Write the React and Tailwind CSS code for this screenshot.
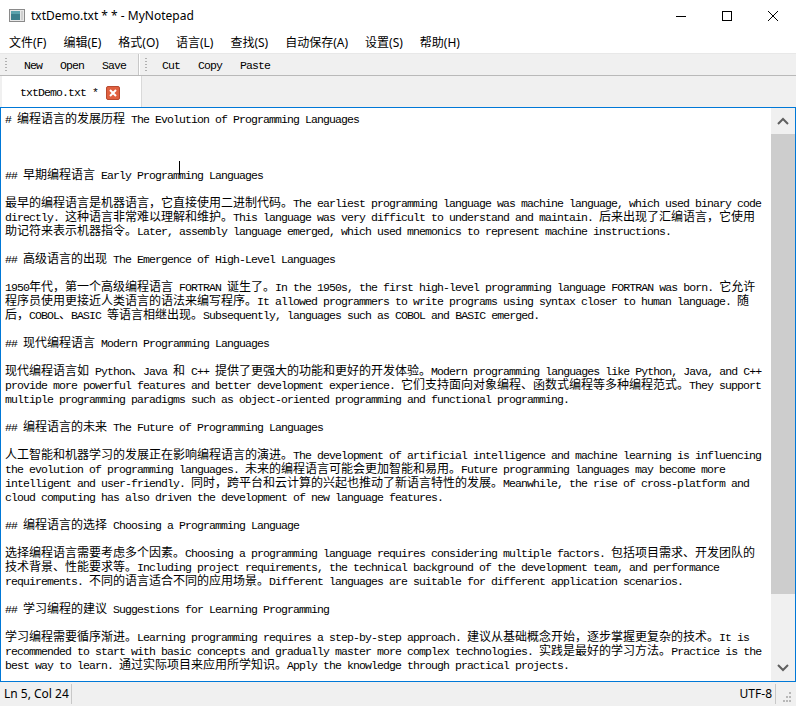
import React from "react";

const CJK_RE = /([\u3000-\u303f\u4e00-\u9fff\uff00-\uffef]+)/;

const lines = [
  "# 编程语言的发展历程 The Evolution of Programming Languages",
  "",
  "",
  "",
  "CARET",
  "",
  "最早的编程语言是机器语言，它直接使用二进制代码。The earliest programming language was machine language, which used binary code",
  "directly. 这种语言非常难以理解和维护。This language was very difficult to understand and maintain. 后来出现了汇编语言，它使用",
  "助记符来表示机器指令。Later, assembly language emerged, which used mnemonics to represent machine instructions.",
  "",
  "## 高级语言的出现 The Emergence of High-Level Languages",
  "",
  "1950年代，第一个高级编程语言 FORTRAN 诞生了。In the 1950s, the first high-level programming language FORTRAN was born. 它允许",
  "程序员使用更接近人类语言的语法来编写程序。It allowed programmers to write programs using syntax closer to human language. 随",
  "后，COBOL、BASIC 等语言相继出现。Subsequently, languages such as COBOL and BASIC emerged.",
  "",
  "## 现代编程语言 Modern Programming Languages",
  "",
  "现代编程语言如 Python、Java 和 C++ 提供了更强大的功能和更好的开发体验。Modern programming languages like Python, Java, and C++",
  "provide more powerful features and better development experience. 它们支持面向对象编程、函数式编程等多种编程范式。They support",
  "multiple programming paradigms such as object-oriented programming and functional programming.",
  "",
  "## 编程语言的未来 The Future of Programming Languages",
  "",
  "人工智能和机器学习的发展正在影响编程语言的演进。The development of artificial intelligence and machine learning is influencing",
  "the evolution of programming languages. 未来的编程语言可能会更加智能和易用。Future programming languages may become more",
  "intelligent and user-friendly. 同时，跨平台和云计算的兴起也推动了新语言特性的发展。Meanwhile, the rise of cross-platform and",
  "cloud computing has also driven the development of new language features.",
  "",
  "## 编程语言的选择 Choosing a Programming Language",
  "",
  "选择编程语言需要考虑多个因素。Choosing a programming language requires considering multiple factors. 包括项目需求、开发团队的",
  "技术背景、性能要求等。Including project requirements, the technical background of the development team, and performance",
  "requirements. 不同的语言适合不同的应用场景。Different languages are suitable for different application scenarios.",
  "",
  "## 学习编程的建议 Suggestions for Learning Programming",
  "",
  "学习编程需要循序渐进。Learning programming requires a step-by-step approach. 建议从基础概念开始，逐步掌握更复杂的技术。It is",
  "recommended to start with basic concepts and gradually master more complex technologies. 实践是最好的学习方法。Practice is the",
  "best way to learn. 通过实际项目来应用所学知识。Apply the knowledge through practical projects.",
  "",
];

const menus = ["文件(F)", "编辑(E)", "格式(O)", "语言(L)", "查找(S)", "自动保存(A)", "设置(S)", "帮助(H)"];

// latin in a 6px monospace cell, CJK in 12px cells
const Mixed = ({ text }) =>
  text.split(CJK_RE).map((s, i) =>
    !s ? null : i % 2 ? (
      <span key={i} className="font-['Noto_Sans_CJK_SC',sans-serif] text-[12px]">
        {s}
      </span>
    ) : (
      <span key={i} className="font-['Liberation_Mono',monospace] text-[11.5px] tracking-[-0.9px]">
        {s}
      </span>
    )
  );

const Handle = () => (
  <div className="flex flex-col gap-[2px] px-[4px]">
    {[0, 1, 2, 3, 4].map((i) => (
      <span key={i} className="w-[2px] h-[1px] bg-[#b0b0b0]" />
    ))}
  </div>
);

const ToolBtn = ({ label }) => (
  <span className="px-[9px] text-[11.5px] tracking-[-0.9px] font-['Liberation_Mono',monospace] text-black">
    {label}
  </span>
);

export default function App() {
  return (
    <div className="w-[796px] h-[706px] flex flex-col bg-white overflow-hidden font-['Noto_Sans','Noto_Sans_CJK_SC',sans-serif]">
      {/* title bar */}
      <div className="h-[31px] flex items-center shrink-0">
        <svg width="16" height="13" viewBox="0 0 16 13" className="ml-[9px] mr-[6px]">
          <rect x="0.5" y="0.5" width="15" height="12" fill="#e8e8e8" stroke="#8a8a8a" />
          <rect x="2" y="2" width="9" height="9" fill="#3a7f8c" />
          <rect x="2" y="2" width="9" height="3" fill="#5aa3ad" />
          <rect x="12" y="2" width="2" height="9" fill="#cfcfcf" />
        </svg>
        <span className="text-[12px] text-black">txtDemo.txt * * - MyNotepad</span>
        <div className="ml-auto flex h-full">
          <div className="w-[46px] flex items-center justify-center">
            <svg width="10" height="10" viewBox="0 0 10 10">
              <line x1="0" y1="5.5" x2="10" y2="5.5" stroke="#000" strokeWidth="1" />
            </svg>
          </div>
          <div className="w-[46px] flex items-center justify-center">
            <svg width="10" height="10" viewBox="0 0 10 10">
              <rect x="0.5" y="0.5" width="9" height="9" fill="none" stroke="#000" strokeWidth="1" />
            </svg>
          </div>
          <div className="w-[46px] flex items-center justify-center">
            <svg width="10" height="10" viewBox="0 0 10 10">
              <path d="M0 0 L10 10 M10 0 L0 10" stroke="#000" strokeWidth="1" />
            </svg>
          </div>
        </div>
      </div>

      {/* menu bar */}
      <div className="h-[23px] pt-[2px] flex items-center pl-[0.5px] border-b border-[#e8e8e8] shrink-0">
        {menus.map((m) => (
          <span key={m} className="px-[8.5px] text-[12px] text-black leading-[20px]">
            {m}
          </span>
        ))}
      </div>

      {/* toolbars */}
      <div className="h-[22px] pt-[3px] flex items-stretch bg-[#f0f0f0] border-b border-[#b9b9b9] shrink-0">
        <div className="w-[139px] -mt-[3px] flex items-center pl-[1px] border-r border-[#c8c8c8]">
          <Handle />
          <div className="flex items-center pl-[4px] pt-[3px]">
            <ToolBtn label="New" />
            <ToolBtn label="Open" />
            <ToolBtn label="Save" />
          </div>
        </div>
        <div className="flex -mt-[3px] items-center pl-[1px] border-l border-white">
          <Handle />
          <div className="flex items-center pl-[2px] pt-[3px]">
            <ToolBtn label="Cut" />
            <ToolBtn label="Copy" />
            <ToolBtn label="Paste" />
          </div>
        </div>
      </div>

      {/* tab bar */}
      <div className="h-[31px] flex items-end bg-[#f0f0f0] shrink-0 pl-[2px]">
        <div className="w-[140px] h-[31px] pt-[2px] bg-white flex items-center pl-[18px] border-r border-[#d9d9d9]">
          <span className="text-[11.5px] tracking-[-0.9px] font-['Liberation_Mono',monospace] text-black">
            txtDemo.txt *
          </span>
          <span className="ml-[8px] w-[14px] h-[14px] rounded-[2px] bg-[#e0603f] border border-[#b84a30] flex items-center justify-center">
            <svg width="8" height="8" viewBox="0 0 8 8">
              <path d="M1 1 L7 7 M7 1 L1 7" stroke="#fff" strokeWidth="2" />
            </svg>
          </span>
        </div>
      </div>

      {/* editor */}
      <div className="flex-1 flex border border-[#0078d7] min-h-0">
        <div className="flex-1 pt-[2px] pl-[4px] overflow-hidden text-black">
          {lines.map((l, i) =>
            l === "CARET" ? (
              <div key={i} className="h-[14px] leading-[14px] whitespace-pre">
                <Mixed text="## 早期编程语言 Early Program" />
                <span className="relative">
                  <span className="absolute left-0 top-[-1px] h-[14px] w-px bg-black" />
                </span>
                <Mixed text="ming Languages" />
              </div>
            ) : (
              <div key={i} className="h-[14px] leading-[14px] whitespace-pre">
                <Mixed text={l} />
              </div>
            )
          )}
        </div>
        <div className="w-[24px] flex flex-col bg-[#f0f0f0]">
          <div className="h-[26px] flex items-center justify-center">
            <svg width="12" height="8" viewBox="0 0 12 8">
              <path d="M1 7 L6 2 L11 7" fill="none" stroke="#606060" strokeWidth="2" />
            </svg>
          </div>
          <div className="h-[460px] bg-[#cdcdcd]" />
          <div className="flex-1" />
          <div className="h-[26px] flex items-center justify-center">
            <svg width="12" height="8" viewBox="0 0 12 8">
              <path d="M1 1 L6 6 L11 1" fill="none" stroke="#606060" strokeWidth="2" />
            </svg>
          </div>
        </div>
      </div>

      {/* status bar */}
      <div className="h-[24px] flex items-center bg-[#f0f0f0] shrink-0 text-[12px] text-black">
        <span className="pl-[4px] pr-[2px]">Ln 5, Col 24</span>
        <span className="w-px h-[20px] bg-[#c8c8c8]" />
        <span className="ml-auto pr-[3px]">UTF-8</span>
        <span className="w-px h-[20px] bg-[#c8c8c8]" />
        <svg width="20" height="20" viewBox="0 0 20 20" className="self-end">
          <g fill="#b8b8b8">
            <rect x="13" y="6" width="2" height="2" />
            <rect x="10" y="10" width="2" height="2" />
            <rect x="13" y="10" width="2" height="2" />
            <rect x="7" y="14" width="2" height="2" />
            <rect x="10" y="14" width="2" height="2" />
            <rect x="13" y="14" width="2" height="2" />
          </g>
        </svg>
      </div>
    </div>
  );
}
